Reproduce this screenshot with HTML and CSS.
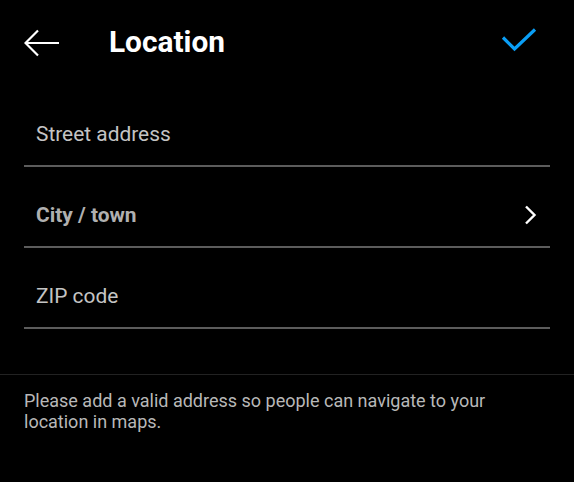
FILE: index.html
```html
<!DOCTYPE html>
<html>
<head>
<meta charset="utf-8">
<link rel="stylesheet" href="styles.css">
</head>
<body>
<div class="screen">
  <header class="bar">
    <svg class="back" width="36" height="28" viewBox="0 0 36 28">
      <path d="M35 14H2M14 1.5L1.5 14L14 26.5" fill="none" stroke="#fff" stroke-width="2.2"/>
    </svg>
    <h1 class="title">Location</h1>
    <svg class="check" width="38" height="26" viewBox="0 0 38 26">
      <path d="M3 9.5L14.5 21L35 1.5" fill="none" stroke="#0a9ef5" stroke-width="3.2"/>
    </svg>
  </header>
  <div class="fields">
    <div class="field"><span class="label">Street address</span></div>
    <div class="field select"><span class="label bold">City / town</span>
      <svg class="chev" width="14" height="20" viewBox="0 0 14 20">
        <path d="M2 1.5L10.5 10L2 18.5" fill="none" stroke="#fff" stroke-width="2.4"/>
      </svg>
    </div>
    <div class="field"><span class="label">ZIP code</span></div>
  </div>
  <div class="help">Please add a valid address so people can navigate to your location in maps.</div>
</div>
</body>
</html>
```
FILE: styles.css
```css
html, body {
  margin: 0;
  padding: 0;
  background: #000;
}
.screen {
  width: 574px;
  height: 482px;
  background: #000;
  font-family: Roboto, "Noto Sans", sans-serif;
  overflow: hidden;
}
.bar {
  height: 86px;
  display: flex;
  align-items: center;
  padding: 0 24px;
  box-sizing: border-box;
}
.back {
  display: block;
  margin-top: -1px;
}
.title {
  margin: -2px 0 0 49px;
  font-size: 29.8px;
  font-weight: 700;
  color: #fff;
  flex: 1;
  line-height: 34px;
}
.check {
  display: block;
  margin-right: 12px;
  margin-top: -4px;
}
.fields {
  padding: 0 24px;
}
.field {
  height: 81px;
  box-sizing: border-box;
  border-bottom: 2px solid #5c5c5c;
  padding: 36px 12px 0;
  display: flex;
  justify-content: space-between;
  align-items: flex-start;
}
.label {
  font-size: 20.9px;
  line-height: 24px;
  color: #c4c4c4;
}
.label.bold {
  font-weight: 700;
  color: #b0b0b0;
}
.chev {
  display: block;
  margin-top: 2px;
  margin-right: 0;
}
.help {
  margin-top: 45px;
  border-top: 1px solid #222;
  padding: 15px 24px 0;
  font-size: 18px;
  line-height: 21px;
  color: #b8b8b8;
}
```
